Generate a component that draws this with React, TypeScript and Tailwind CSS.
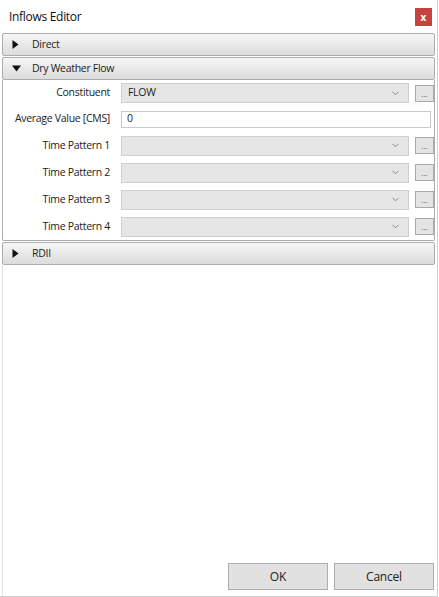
import React from "react";

const font = { fontFamily: '"Open Sans", "Noto Sans", sans-serif' };

function Caret({ open }: { open?: boolean }) {
  return open ? (
    <svg width="9" height="7" viewBox="0 0 9 7" className="shrink-0">
      <path d="M0 0.5 L9 0.5 L4.5 6.5 Z" fill="#111" />
    </svg>
  ) : (
    <svg width="7" height="9" viewBox="0 0 7 9" className="shrink-0">
      <path d="M0.5 0 L6.5 4.5 L0.5 9 Z" fill="#111" />
    </svg>
  );
}

function Header({ label, open }: { label: string; open?: boolean }) {
  return (
    <div className="flex h-[23px] items-center gap-[11px] rounded-[2px] border border-[#acacac] bg-gradient-to-b from-[#f6f6f6] to-[#dcdcdc] pl-[9px] text-[10.5px] tracking-[-0.3px] text-[#222]">
      <Caret open={open} />
      <span className={open ? "ml-0" : "ml-[2px]"}>{label}</span>
    </div>
  );
}

function Chevron() {
  return (
    <svg width="7" height="5" viewBox="0 0 7 5">
      <path d="M0.5 0.8 L3.5 3.8 L6.5 0.8" stroke="#888" strokeWidth="1" fill="none" />
    </svg>
  );
}

const labelCls = "whitespace-nowrap pr-[11px] text-right text-[10.5px] tracking-[-0.3px] text-[#222]";

function ComboRow({ label, value, h = "h-[27px]" }: { label: string; value?: string; h?: string }) {
  return (
    <div className={`grid ${h} grid-cols-[112px_1fr_25px] items-center`}>
      <div className={labelCls}>{label}</div>
      <div className="flex h-[20px] items-center justify-between border border-[#cfcfcf] bg-[#e6e6e6] pl-[6px] pr-[9px] text-[10.5px] tracking-[-0.3px] text-[#222]">
        <span>{value}</span>
        <Chevron />
      </div>
      <div className="ml-[6px] flex h-[17px] w-[19px] items-end justify-center border border-[#a9a9a9] bg-[#e4e4e4] pb-[3px] text-[8px] leading-none text-[#555]">
        ...
      </div>
    </div>
  );
}

export default function App() {
  return (
    <div className="h-[597px] w-[439px] bg-white" style={font}>
      <div className="flex h-full w-[438px] flex-col border-r border-b border-[#cfcfcf] bg-white">
        <div className="flex h-[33px] items-center justify-between pl-[9px] pr-[5px]">
          <span className="text-[12px] tracking-[-0.3px] text-[#111]">Inflows Editor</span>
          <div className="mt-[1px] flex h-[18px] w-[17px] items-center justify-center bg-[#c94242] text-[10px] font-bold leading-none text-white">
            x
          </div>
        </div>
        <div className="flex flex-1 flex-col px-[2px]">
          <Header label="Direct" />
          <div className="mt-[1px]">
            <Header label="Dry Weather Flow" open />
          </div>
          <div className="rounded-b-[2px] border border-t-0 border-[#acacac] pl-[6px] pr-0">
            <ComboRow label="Constituent" value="FLOW" h="h-[26px]" />
            <div className="grid h-[26px] grid-cols-[112px_1fr] items-center">
              <div className={labelCls}>Average Value [CMS]</div>
              <div className="mr-[3px] flex h-[17px] items-center border border-[#c9c9c9] bg-white pl-[5px] text-[10.5px] text-[#222]">
                0
              </div>
            </div>
            <ComboRow label="Time Pattern 1" />
            <ComboRow label="Time Pattern 2" />
            <ComboRow label="Time Pattern 3" />
            <ComboRow label="Time Pattern 4" />
          </div>
          <div className="mt-[1px]">
            <Header label="RDII" />
          </div>
          <div className="flex flex-1 flex-col justify-end border-l border-[#e3e3e3] pb-[6px]">
            <div className="flex justify-end gap-[6px] pr-[1px]">
              <button className="h-[27px] w-[100px] border border-[#adadad] bg-[#e1e1e1] text-[12px] tracking-[-0.2px] text-[#222]">
                OK
              </button>
              <button className="h-[27px] w-[100px] border border-[#adadad] bg-[#e1e1e1] text-[12px] tracking-[-0.2px] text-[#222]">
                Cancel
              </button>
            </div>
          </div>
        </div>
      </div>
    </div>
  );
}
